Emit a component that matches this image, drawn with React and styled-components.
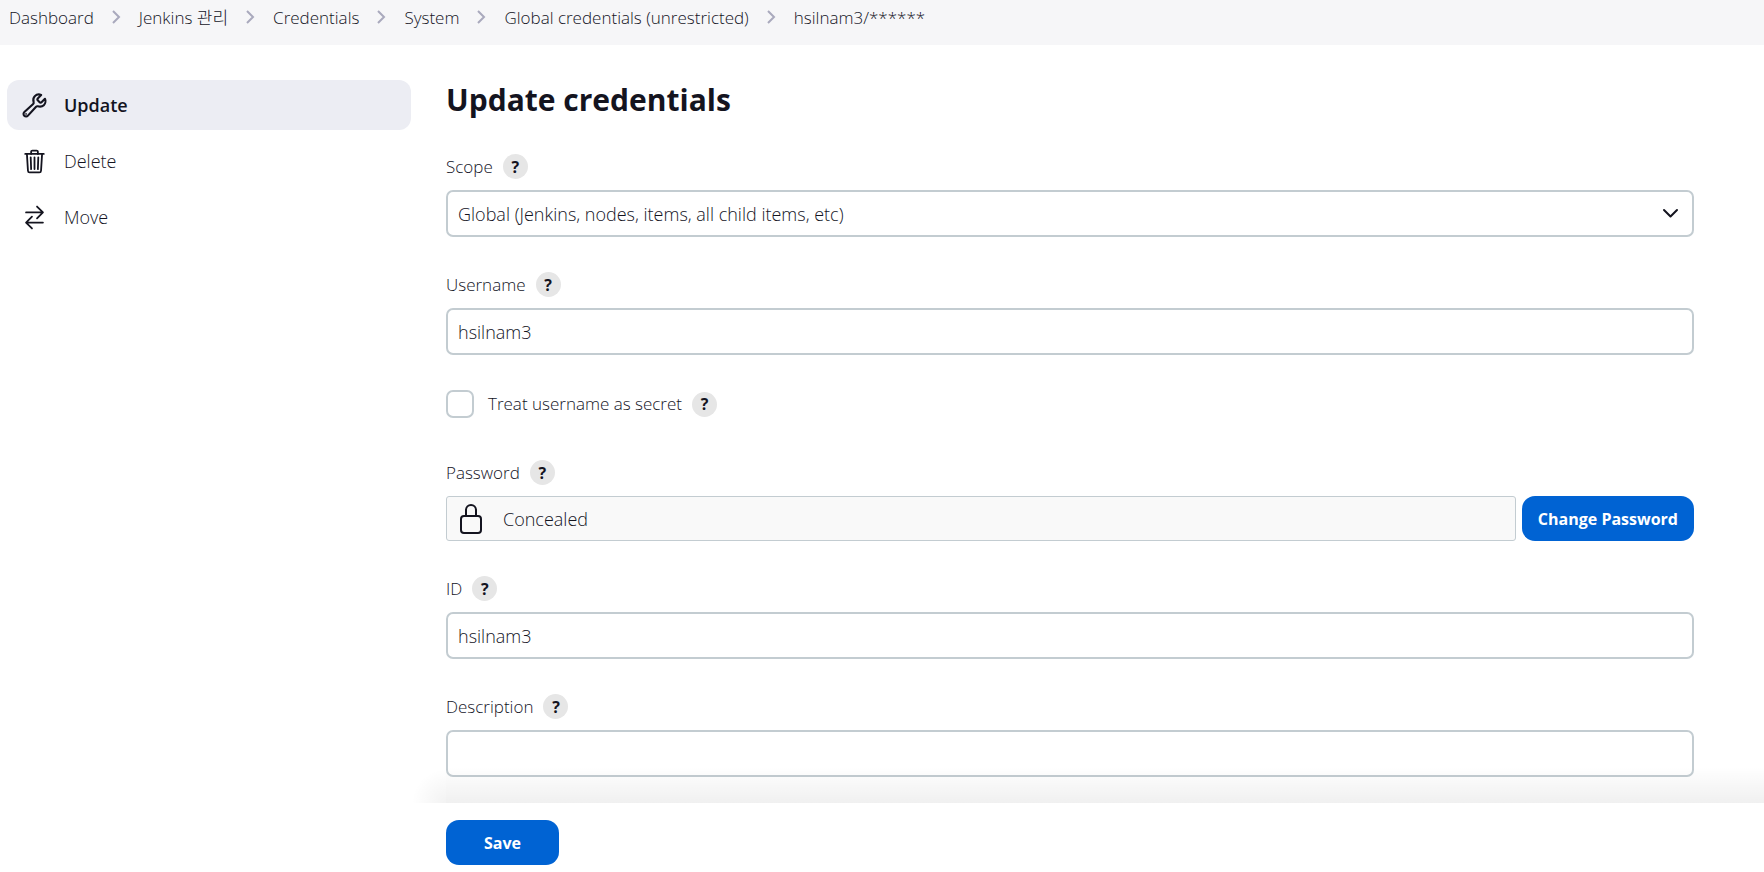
import React from "react";
import styled, { createGlobalStyle } from "styled-components";
import {
  IoBuildOutline,
  IoTrashOutline,
  IoSwapHorizontalOutline,
  IoLockClosedOutline,
} from "react-icons/io5";

const GlobalStyle = createGlobalStyle`
  *, *::before, *::after { box-sizing: border-box; }
  body {
    margin: 0;
    background: #fff;
    color: #14141f;
    font-family: "Open Sans", "Noto Sans CJK KR", sans-serif;
    font-size: 18px;
    font-weight: 300;
    line-height: 24px;
  }
  button, input, select { font: inherit; color: inherit; }
`;

const Page = styled.div`
  display: flex;
  flex-direction: column;
  min-height: 100vh;
`;

const BreadcrumbBar = styled.nav`
  background: #f6f6f8;
  height: 45px;
  padding: 6px 9px 0;
`;

const BreadcrumbList = styled.ol`
  display: flex;
  align-items: center;
  list-style: none;
  margin: 0;
  padding: 0;
  font-size: 17px;
  white-space: nowrap;
`;

const Crumb = styled.li`
  display: flex;
  align-items: center;
`;

const CrumbLink = styled.a`
  color: inherit;
  text-decoration: none;
`;

const Separator = styled.svg`
  width: 9px;
  height: 14px;
  margin: 0 18px 2px;
  fill: none;
  stroke: #a9a9bd;
  stroke-width: 2;
`;

const Body = styled.div`
  flex: 1;
  display: flex;
  gap: 35px;
  padding-left: 7px;
`;

const SidePanel = styled.nav`
  flex: 0 0 404px;
  display: flex;
  flex-direction: column;
  gap: 6px;
  padding-top: 35px;
`;

const Task = styled.a`
  display: flex;
  align-items: center;
  gap: 16px;
  height: 50px;
  padding: 0 14px;
  border-radius: 12px;
  color: inherit;
  text-decoration: none;
  background: ${(p) => (p.$active ? "#ecedf3" : "transparent")};
  font-weight: ${(p) => (p.$active ? 600 : 300)};

  svg {
    width: 27px;
    height: 27px;
  }
  svg path {
    stroke-width: ${(p) => (p.$active ? "40px" : "34px")};
  }
`;

const Main = styled.main`
  flex: 1;
  min-width: 0;
  display: flex;
  flex-direction: column;
`;

const Form = styled.form`
  flex: 1;
  display: flex;
  flex-direction: column;
`;

const Fields = styled.div`
  flex: 1;
  display: flex;
  flex-direction: column;
  gap: 35px;
  padding: 35px 70px 26px 0;
`;

const Title = styled.h1`
  margin: 0;
  font-size: 30px;
  font-weight: 700;
  line-height: 39px;
`;

const LabelRow = styled.div`
  display: flex;
  align-items: center;
  gap: 10px;
  height: 25px;
  margin-bottom: 11px;
  font-size: 17px;
`;

const HelpButton = styled.button`
  width: 25px;
  height: 25px;
  padding: 0;
  border: 0;
  border-radius: 50%;
  background: #e6e6e6;
  font-size: 16px;
  font-weight: 700;
  line-height: 24px;
  text-align: center;
`;

const TextInput = styled.input`
  display: block;
  width: 100%;
  height: 47px;
  padding: 0 10px;
  border: 2px solid #c3ccd1;
  border-radius: 7px;
  background: #fff;
`;

const SelectWrap = styled.div`
  position: relative;
`;

const SelectInput = styled(TextInput).attrs({ as: "select" })`
  appearance: none;
`;

const SelectArrow = styled.svg`
  position: absolute;
  right: 15px;
  top: 18px;
  width: 17px;
  height: 10px;
  fill: none;
  stroke: currentColor;
  stroke-width: 2;
  stroke-linecap: round;
  stroke-linejoin: round;
  pointer-events: none;
`;

const CheckRow = styled.div`
  display: flex;
  align-items: center;
  gap: 10px;
  height: 28px;
  margin-bottom: 7px;
  font-size: 17px;
`;

const CheckLabel = styled.label`
  display: flex;
  align-items: center;
  gap: 14px;
`;

const Checkbox = styled.input`
  appearance: none;
  width: 28px;
  height: 28px;
  margin: 0;
  border: 2px solid #c3ccd1;
  border-radius: 7px;
  background: #fff;
`;

const SecretRow = styled.div`
  display: flex;
  gap: 6px;
`;

const Concealed = styled.div`
  flex: 1;
  display: flex;
  align-items: center;
  gap: 16px;
  height: 45px;
  padding: 0 8px;
  border: 1px solid #c3ccd1;
  border-radius: 3px;
  background: #f9f9f9;

  svg {
    width: 32px;
    height: 32px;
  }
`;

const PrimaryButton = styled.button`
  height: 45px;
  min-width: ${(p) => p.$minWidth || "0"};
  padding: 1px 16px 0;
  border: 0;
  border-radius: 13px;
  background: #0063d3;
  color: #fff;
  font-size: 16px;
  font-weight: 700;
`;

const SaveBar = styled.div`
  position: sticky;
  bottom: 0;
  padding: 17px 70px 7px 0;
  background: #fff;

  &::before,
  &::after {
    content: "";
    position: absolute;
    bottom: 100%;
    height: 36px;
    pointer-events: none;
  }
  &::before {
    left: 0;
    right: 0;
    background: linear-gradient(to top, rgba(0, 0, 0, 0.06), transparent);
  }
  &::after {
    right: 100%;
    width: 34px;
    background: radial-gradient(
      circle at bottom right,
      rgba(0, 0, 0, 0.05),
      transparent 34px
    );
  }
`;

const crumbs = [
  "Dashboard",
  "Jenkins 관리",
  "Credentials",
  "System",
  "Global credentials (unrestricted)",
  "hsilnam3/******",
];

const tasks = [
  { label: "Update", Icon: IoBuildOutline, active: true },
  { label: "Delete", Icon: IoTrashOutline },
  { label: "Move", Icon: IoSwapHorizontalOutline },
];

function Help({ topic }) {
  return (
    <HelpButton type="button" aria-label={`Help for feature: ${topic}`}>
      ?
    </HelpButton>
  );
}

function Field({ id, label, children }) {
  return (
    <div>
      <LabelRow>
        <label htmlFor={id}>{label}</label>
        <Help topic={label} />
      </LabelRow>
      {children}
    </div>
  );
}

export default function App() {
  return (
    <Page>
      <GlobalStyle />
      <BreadcrumbBar aria-label="Breadcrumb">
        <BreadcrumbList>
          {crumbs.map((text, i) => (
            <Crumb key={text}>
              {i > 0 && (
                <Separator viewBox="0 0 9 14" aria-hidden="true">
                  <path d="M1 1l6 6-6 6" />
                </Separator>
              )}
              <CrumbLink href="#">{text}</CrumbLink>
            </Crumb>
          ))}
        </BreadcrumbList>
      </BreadcrumbBar>
      <Body>
        <SidePanel aria-label="Tasks">
          {tasks.map(({ label, Icon, active }) => (
            <Task key={label} href="#" $active={active}>
              <Icon aria-hidden="true" />
              {label}
            </Task>
          ))}
        </SidePanel>
        <Main>
          <Form onSubmit={(e) => e.preventDefault()}>
            <Fields>
              <Title>Update credentials</Title>
              <Field id="scope" label="Scope">
                <SelectWrap>
                  <SelectInput id="scope">
                    <option>Global (Jenkins, nodes, items, all child items, etc)</option>
                  </SelectInput>
                  <SelectArrow viewBox="0 0 17 10" aria-hidden="true">
                    <path d="M2 2l6.5 6.5L15 2" />
                  </SelectArrow>
                </SelectWrap>
              </Field>
              <Field id="username" label="Username">
                <TextInput id="username" type="text" defaultValue="hsilnam3" />
              </Field>
              <CheckRow>
                <CheckLabel>
                  <Checkbox type="checkbox" />
                  Treat username as secret
                </CheckLabel>
                <Help topic="Treat username as secret" />
              </CheckRow>
              <Field id="change-password" label="Password">
                <SecretRow>
                  <Concealed>
                    <IoLockClosedOutline aria-hidden="true" />
                    Concealed
                  </Concealed>
                  <PrimaryButton id="change-password" type="button">
                    Change Password
                  </PrimaryButton>
                </SecretRow>
              </Field>
              <Field id="credential-id" label="ID">
                <TextInput id="credential-id" type="text" defaultValue="hsilnam3" />
              </Field>
              <Field id="description" label="Description">
                <TextInput id="description" type="text" />
              </Field>
            </Fields>
            <SaveBar>
              <PrimaryButton type="submit" $minWidth="113px">
                Save
              </PrimaryButton>
            </SaveBar>
          </Form>
        </Main>
      </Body>
    </Page>
  );
}
